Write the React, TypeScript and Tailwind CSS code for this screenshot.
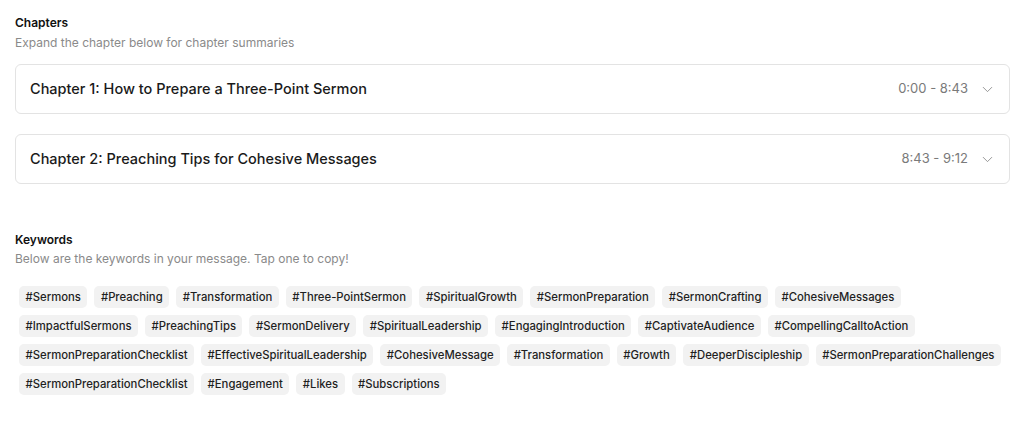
import { ChevronDown } from 'lucide-react';

const chapters = [
  { title: 'Chapter 1: How to Prepare a Three-Point Sermon', time: '0:00 - 8:43' },
  { title: 'Chapter 2: Preaching Tips for Cohesive Messages', time: '8:43 - 9:12' },
];

const keywords = [
  'Sermons', 'Preaching', 'Transformation', 'Three-PointSermon', 'SpiritualGrowth', 'SermonPreparation',
  'SermonCrafting', 'CohesiveMessages', 'ImpactfulSermons', 'PreachingTips', 'SermonDelivery',
  'SpiritualLeadership', 'EngagingIntroduction', 'CaptivateAudience', 'CompellingCalltoAction',
  'SermonPreparationChecklist', 'EffectiveSpiritualLeadership', 'CohesiveMessage', 'Transformation',
  'Growth', 'DeeperDiscipleship', 'SermonPreparationChallenges', 'SermonPreparationChecklist',
  'Engagement', 'Likes', 'Subscriptions',
];

export default function App() {
  return (
    <div className="min-h-[430px] bg-white pl-[15px] pr-[14px] pt-[15px] font-['Inter',sans-serif] text-[#111]">
      <section>
        <h2 className="text-[12px] font-semibold leading-4">Chapters</h2>
        <p className="mt-1 text-[12px] leading-4 text-[#8a8a8a]">Expand the chapter below for chapter summaries</p>
        <div className="mt-[13px] flex flex-col gap-5">
          {chapters.map((c) => (
            <button
              key={c.title}
              className="flex h-[50px] w-full items-center justify-between rounded-md border border-[#e3e3e3] bg-white pl-[14px] pr-[13px] text-left"
            >
              <span className="text-[14.5px] font-medium text-[#1a1a1a]">{c.title}</span>
              <span className="flex items-center gap-[11px]">
                <span className="text-[13px] text-[#7a7a7a]">{c.time}</span>
                <ChevronDown className="h-[17px] w-[17px] text-[#8a8a8a]" strokeWidth={1.25} />
              </span>
            </button>
          ))}
        </div>
      </section>

      <section className="mt-[48px]">
        <h2 className="text-[12px] font-semibold leading-4">Keywords</h2>
        <p className="mt-[3px] text-[12px] leading-4 text-[#8a8a8a]">Below are the keywords in your message. Tap one to copy!</p>
        <div className="mt-[19px] flex flex-wrap gap-x-[7px] gap-y-[7px] px-1">
          {keywords.map((k, i) => (
            <span
              key={i}
              className="flex h-[22px] cursor-pointer items-center rounded-[5px] bg-[#f2f2f2] px-[6.5px] text-[11.3px] font-medium text-[#1f1f1f]"
            >
              #{k}
            </span>
          ))}
        </div>
      </section>
    </div>
  );
}
